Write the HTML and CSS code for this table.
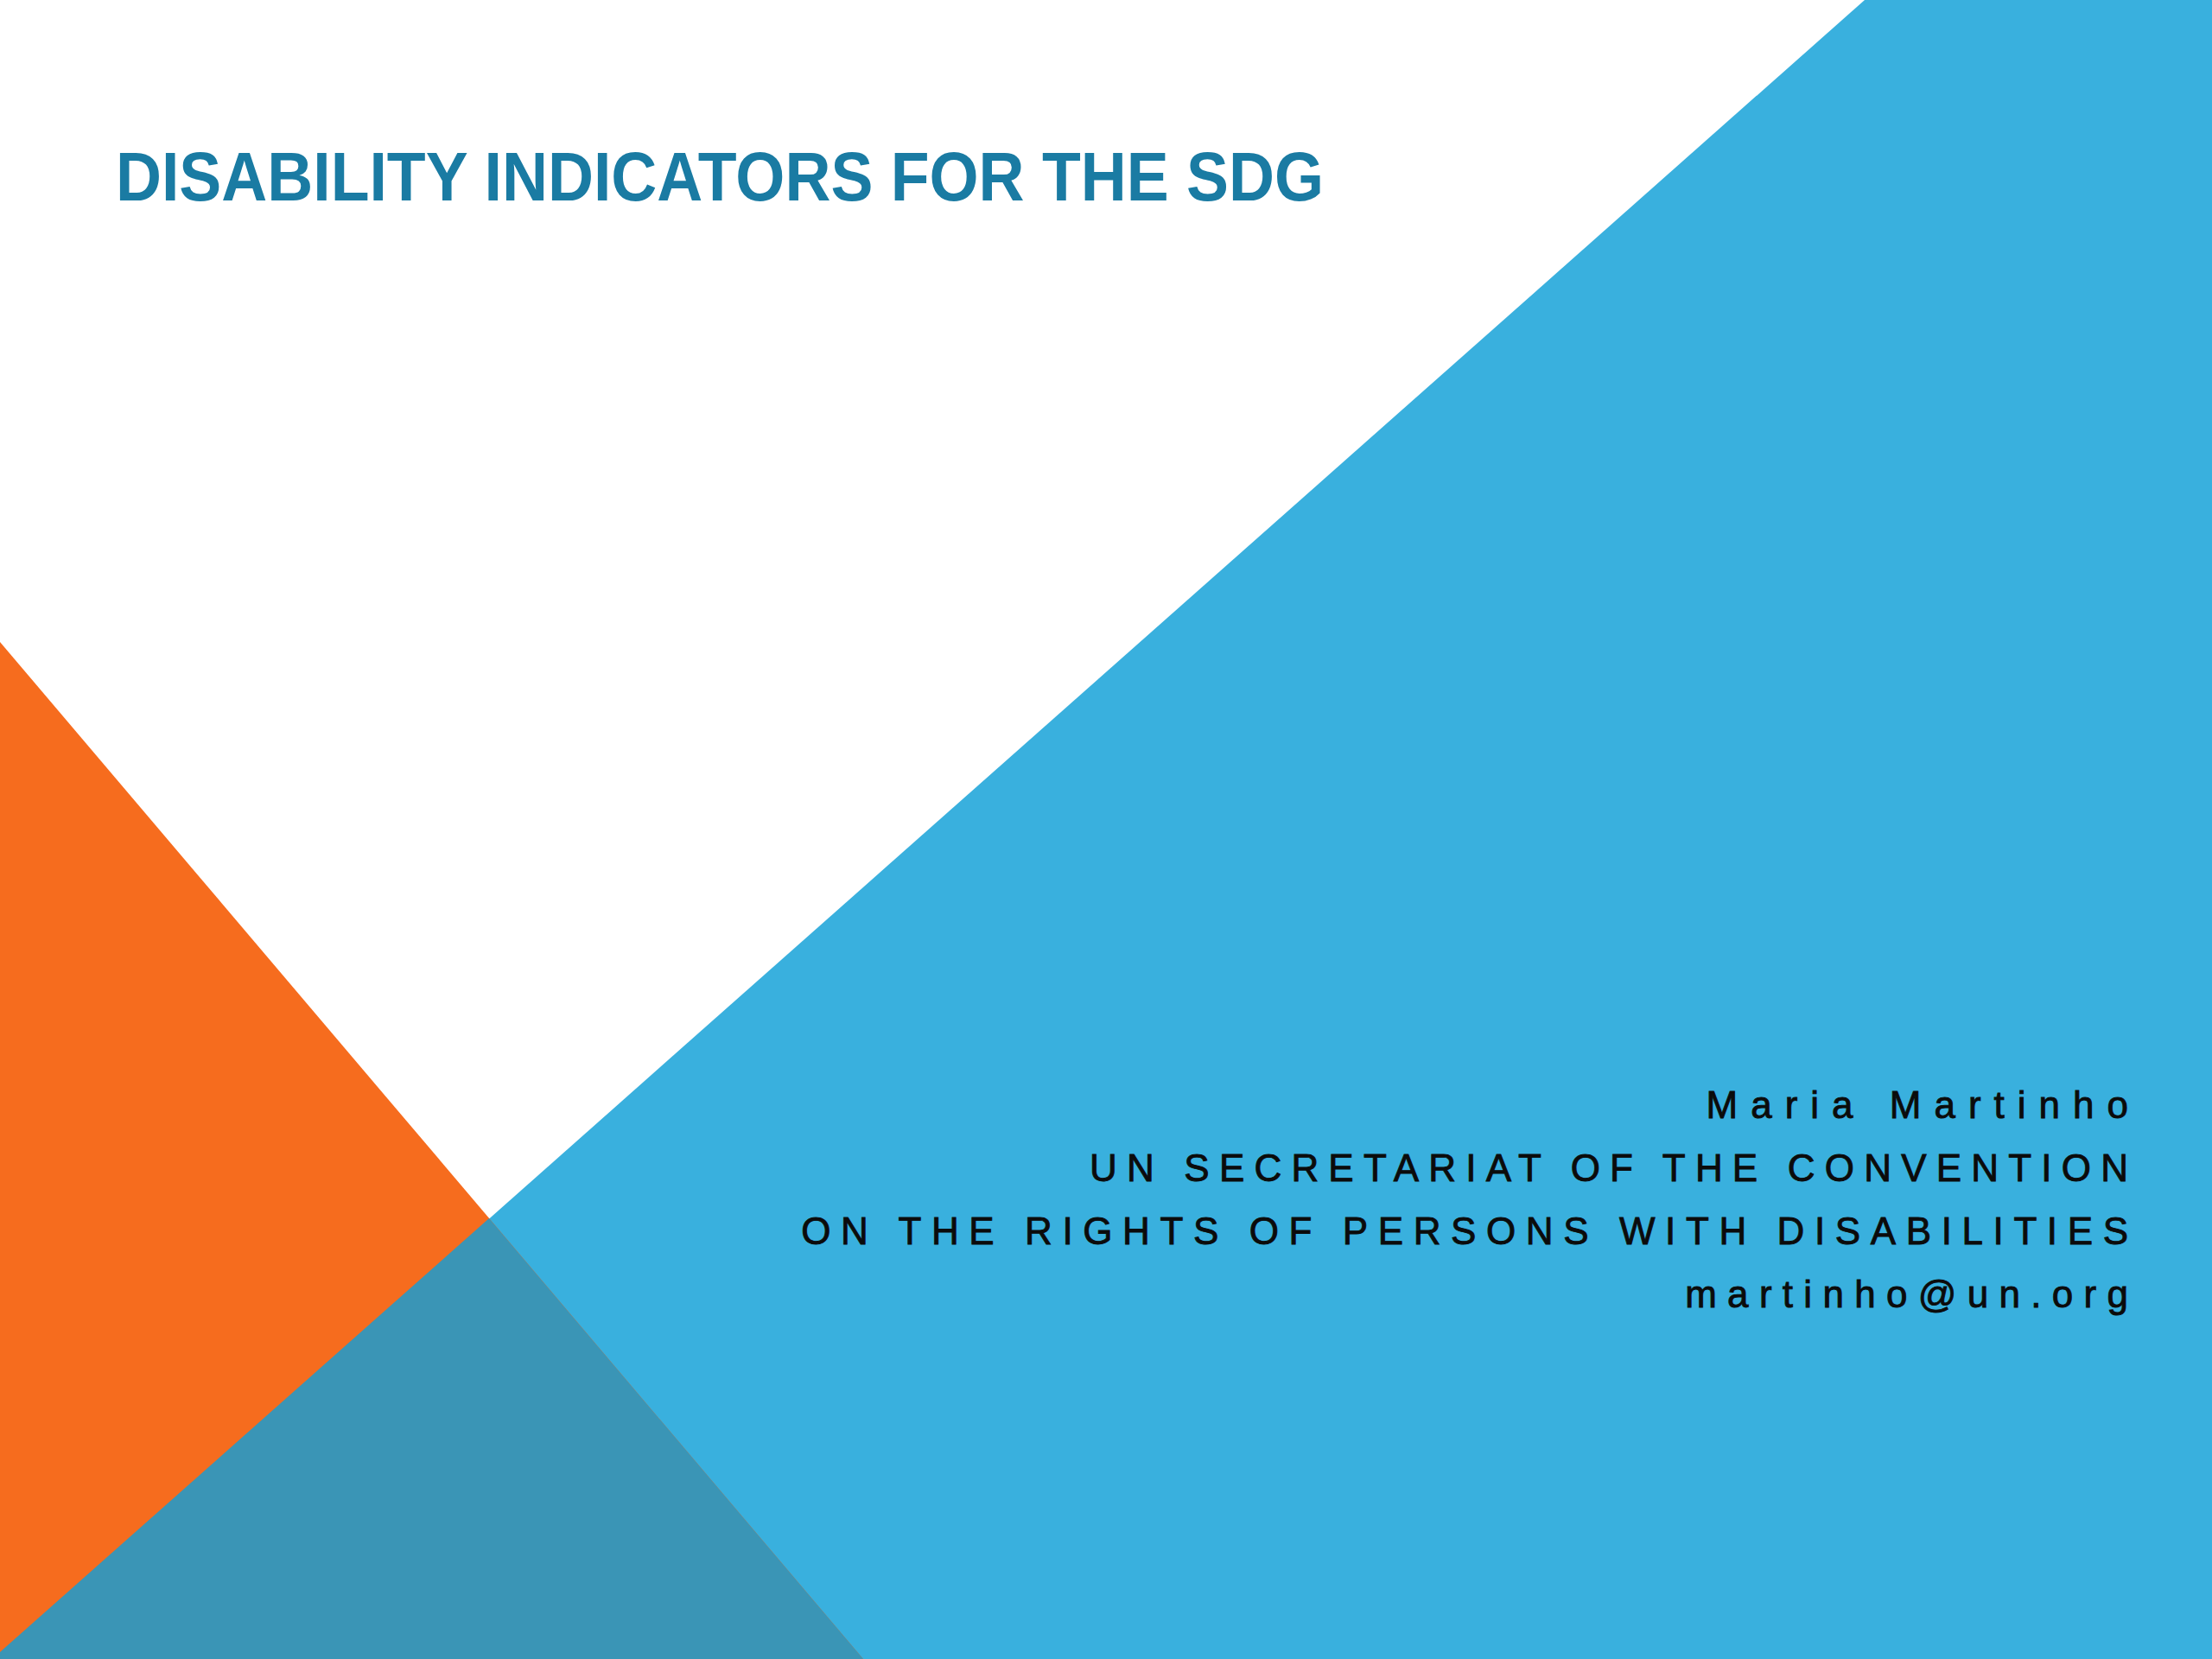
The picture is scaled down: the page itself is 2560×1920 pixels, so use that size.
FILE: index.html
```html
<!DOCTYPE html>
<html lang="en">
<head>
<meta charset="utf-8">
<title>Disability Indicators for the SDG</title>
<link rel="stylesheet" href="styles.css">
</head>
<body>
<main class="slide">
  <svg class="backdrop" viewBox="0 0 2560 1920" preserveAspectRatio="none" aria-hidden="true">
    <polygon class="shape-blue" points="2158,0 2560,0 2560,1920 0,1920 0,1912"/>
    <polygon class="shape-orange" points="0,743 999,1920 0,1920"/>
    <polygon class="shape-overlap" points="0,1912 566,1410 999,1920 0,1920"/>
  </svg>
  <h1 class="title">DISABILITY INDICATORS FOR THE SDG</h1>
  <div class="byline">
    <p class="line line-name">Maria Martinho</p>
    <p class="line line-caps">UN SECRETARIAT OF THE CONVENTION</p>
    <p class="line line-caps line-wide">ON THE RIGHTS OF PERSONS WITH DISABILITIES</p>
    <p class="line line-mail">martinho@un.org</p>
  </div>
</main>
</body>
</html>
```

FILE: styles.css
```css
html, body {
  margin: 0;
  padding: 0;
  background: #ffffff;
}

.slide {
  position: relative;
  width: 2560px;
  height: 1920px;
  overflow: hidden;
  background: #ffffff;
  display: flex;
  flex-direction: column;
  align-items: flex-start;
  box-sizing: border-box;
  padding: 165px 0 0 134px;
}

.backdrop {
  position: absolute;
  left: 0;
  top: 0;
  width: 2560px;
  height: 1920px;
  z-index: 0;
}

.shape-blue { fill: #39b0de; }
.shape-orange { fill: #f66c1e; }
.shape-overlap { fill: #3a95b6; }

.title {
  position: relative;
  z-index: 1;
  margin: 0;
  font-family: "Liberation Sans", Arial, sans-serif;
  font-weight: 700;
  font-size: 80px;
  line-height: 80px;
  color: #1a7ba3;
  white-space: nowrap;
  transform: scaleX(0.917);
  transform-origin: left center;
}

.byline {
  position: relative;
  z-index: 1;
  margin-top: 997px;
  align-self: flex-end;
  display: flex;
  flex-direction: column;
  align-items: flex-end;
  padding-right: 97px;
}

.line {
  margin: 0;
  font-family: "Liberation Sans", Arial, sans-serif;
  font-size: 44px;
  line-height: 73px;
  height: 73px;
  color: #0b0b0b;
  -webkit-text-stroke: 0.9px #0b0b0b;
  white-space: nowrap;
}

.line-name { letter-spacing: 15px; margin-right: -15px; }
.line-caps { letter-spacing: 11.2px; margin-right: -11.2px; }
.line-caps.line-wide { letter-spacing: 11.6px; margin-right: -11.6px; }
.line-mail { letter-spacing: 12.3px; margin-right: -12.3px; }
```
